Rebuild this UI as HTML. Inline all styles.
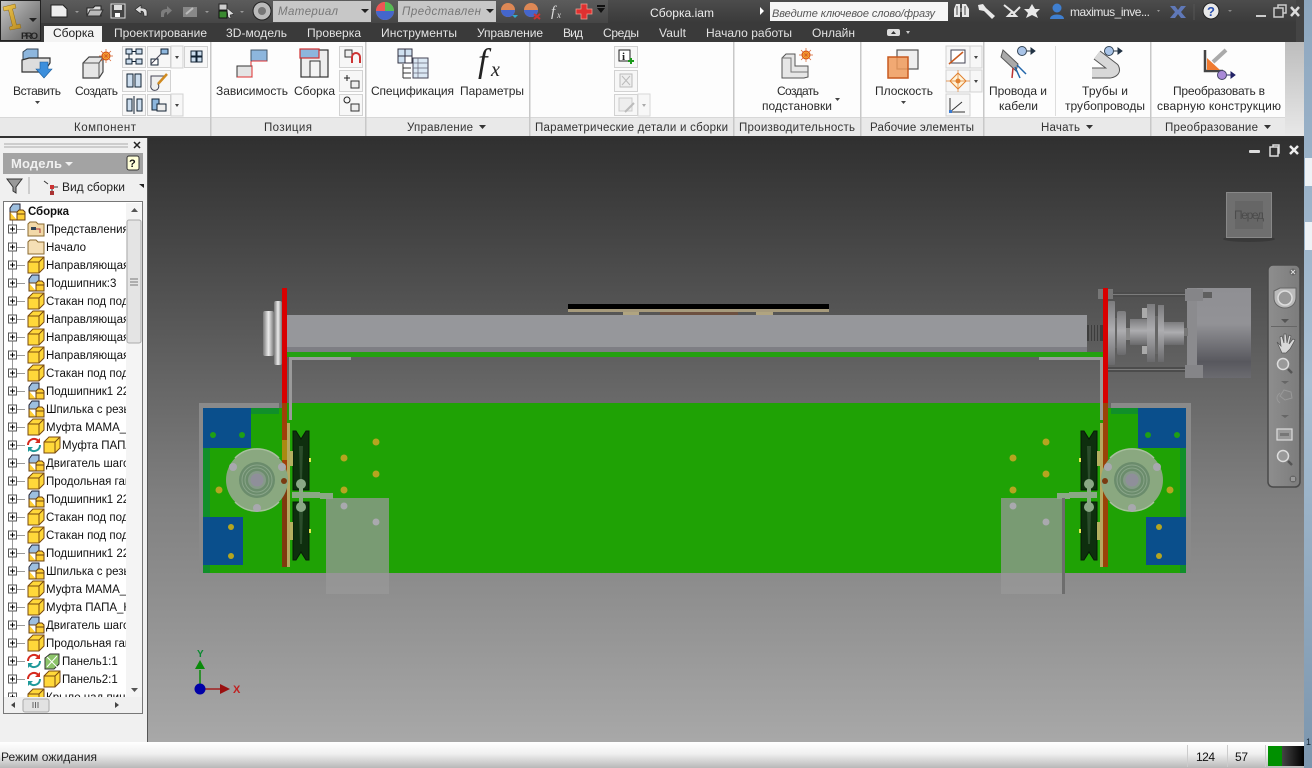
<!DOCTYPE html>
<html><head><meta charset="utf-8"><style>
html,body{margin:0;padding:0;width:1312px;height:768px;overflow:hidden;background:#fff}
svg{display:block}
text{font-family:"Liberation Sans",sans-serif;font-size:11.5px;fill:#222}
.tab{fill:#e4e4e4;font-size:12px}
.rb{fill:#2a2a2a;font-size:12px}
.pt{fill:#333;font-size:11.5px}
.tr{fill:#111;font-size:11.5px}
</style></head><body>
<svg width="1312" height="768" viewBox="0 0 1312 768" xmlns="http://www.w3.org/2000/svg">
<defs>
<linearGradient id="vp" x1="0" y1="0" x2="0" y2="1"><stop offset="0" stop-color="#303030"/><stop offset=".235" stop-color="#4e4e4e"/><stop offset=".6" stop-color="#808080"/><stop offset=".76" stop-color="#8f8f8f"/><stop offset="1" stop-color="#a8a8a8"/></linearGradient>
<linearGradient id="tb" x1="0" y1="0" x2="0" y2="1"><stop offset="0" stop-color="#4c4c4c"/><stop offset="1" stop-color="#3a3a3a"/></linearGradient>
<linearGradient id="qat" x1="0" y1="0" x2="0" y2="1"><stop offset="0" stop-color="#5c5c5c"/><stop offset="1" stop-color="#464646"/></linearGradient>
<linearGradient id="logo" x1="0" y1="0" x2="1" y2="1"><stop offset="0" stop-color="#c8c8c8"/><stop offset=".55" stop-color="#8a8a8a"/><stop offset="1" stop-color="#5a5a5a"/></linearGradient>
<linearGradient id="igold" x1="0" y1="0" x2="1" y2="1"><stop offset="0" stop-color="#f0c850"/><stop offset="1" stop-color="#b88a20"/></linearGradient>
<linearGradient id="st" x1="0" y1="0" x2="0" y2="1"><stop offset="0" stop-color="#fff"/><stop offset=".45" stop-color="#f0f0f0"/><stop offset="1" stop-color="#b8b8b8"/></linearGradient>
<linearGradient id="frm" x1="0" y1="0" x2="0" y2="1"><stop offset="0" stop-color="#8ea7bf"/><stop offset=".5" stop-color="#a9c0d4"/><stop offset="1" stop-color="#7b95ad"/></linearGradient>
<linearGradient id="motor" x1="0" y1="0" x2="0" y2="1"><stop offset="0" stop-color="#8f8f93"/><stop offset=".4" stop-color="#929296"/><stop offset=".82" stop-color="#58585e"/><stop offset="1" stop-color="#6b6b70"/></linearGradient>
<linearGradient id="cyl" x1="0" y1="0" x2="0" y2="1"><stop offset="0" stop-color="#7c7c7e"/><stop offset=".45" stop-color="#adadb0"/><stop offset="1" stop-color="#6a6a6c"/></linearGradient>
<linearGradient id="cylh" x1="0" y1="0" x2="1" y2="0"><stop offset="0" stop-color="#777"/><stop offset=".5" stop-color="#ececec"/><stop offset="1" stop-color="#777"/></linearGradient>
<linearGradient id="blk" x1="0" y1="0" x2="1" y2="0"><stop offset="0" stop-color="#444"/><stop offset="1" stop-color="#000"/></linearGradient>
<linearGradient id="ribr" x1="0" y1="0" x2="0" y2="1"><stop offset="0" stop-color="#bdbdbd"/><stop offset="1" stop-color="#e8e8e8"/></linearGradient>
<linearGradient id="nav" x1="0" y1="0" x2="1" y2="0"><stop offset="0" stop-color="#8e8e8e"/><stop offset="1" stop-color="#7c7c7c"/></linearGradient>
<clipPath id="tc"><rect x="4" y="203" width="122" height="494"/></clipPath>
<clipPath id="vc"><rect x="148" y="138" width="1156" height="604"/></clipPath>
<symbol id="part" viewBox="0 0 18 18" overflow="visible"><path d="M1 6L6 1H17V12L12 17H1Z" fill="#ffd83a" stroke="#7a4a10" stroke-width="1"/><path d="M1 6H12V17M12 6L17 1" fill="none" stroke="#7a4a10" stroke-width="1"/></symbol>
<symbol id="asm" viewBox="0 0 18 18" overflow="visible"><path d="M2 5L5 1H12V9H2Z" fill="#9dbfe0" stroke="#223" stroke-width="1"/><path d="M2 9V17H9V9L11 7H15L17 9V17H9" fill="#ffcf35" stroke="#6a4010" stroke-width="1"/><path d="M2 9H9M9 11H17" stroke="#6a4010" fill="none"/></symbol>
<symbol id="plus" viewBox="0 0 9 9" overflow="visible"><rect x=".5" y=".5" width="8" height="8" fill="#fff" stroke="#555"/><path d="M2 4.500H7M4.500 2V7" stroke="#000"/></symbol>
<symbol id="sync" viewBox="0 0 16 16" overflow="visible"><path d="M2 8A6 6 0 0 1 12 3.500" fill="none" stroke="#d62a1e" stroke-width="2"/><path d="M14 1V6H9Z" fill="#d62a1e"/><path d="M14 8A6 6 0 0 1 4 12.500" fill="none" stroke="#1f9a9a" stroke-width="2"/><path d="M2 15V10H7Z" fill="#1f9a9a"/></symbol>
<symbol id="btn" viewBox="0 0 24 22" overflow="visible"><rect x=".5" y=".5" width="23" height="21" fill="#f7f7f7" stroke="#d2d2d2"/></symbol>
<symbol id="disk" viewBox="-32 -32 64 64" overflow="visible"><circle r="31" fill="#8aa880"/><path d="M-22 -22A31 31 0 0 1 22 -22M-22 22A31 31 0 0 0 22 22" fill="none" stroke="#a8c09e" stroke-width="1.500"/><circle r="18" fill="#6b8c6c"/><circle r="15" fill="none" stroke="#8aa58a"/><circle r="12" fill="none" stroke="#88a488"/><circle r="9" fill="#859a88"/><circle r="6.500" fill="#8f8f9a"/></symbol>
<symbol id="pultop" viewBox="0 0 16 59" overflow="visible"><path d="M0 0H3L8 8L13 0H16V59H0Z" fill="#0e2f0e" stroke="#071a07"/><path d="M6 15H10L9 50H7Z" fill="#2b4d2b"/></symbol>
<symbol id="pulbot" viewBox="0 0 16 58" overflow="visible"><path d="M0 0H16V58H13L8 50L3 58H0Z" fill="#0e2f0e" stroke="#071a07"/><path d="M6 8H10L9 42H7Z" fill="#2b4d2b"/></symbol>
</defs>

<!-- frame backdrop -->
<rect x="0" y="0" width="1312" height="768" fill="#f0f0f0"/>
<rect x="1304" y="0" width="8" height="768" fill="url(#frm)"/>
<rect x="1305" y="158" width="7" height="28" fill="#eef2f6"/>
<rect x="1305" y="222" width="7" height="28" fill="#eef2f6"/>
<text x="1306" y="745" style="font-size:9px;fill:#123">1</text>

<!-- title + tab bars -->
<rect x="0" y="0" width="1304" height="23" fill="url(#tb)"/>
<rect x="40" y="0" width="568" height="23" fill="url(#qat)"/>
<rect x="0" y="23" width="1304" height="19" fill="#3a3a3a"/>
<rect x="1296" y="0" width="8" height="42" fill="#444"/>

<!-- logo -->
<rect x=".5" y=".5" width="40" height="40" fill="url(#logo)" stroke="#222"/>
<path d="M3 7L15 4L16 8L12.500 9L16.500 25L20 24L21 28L10 30L9.500 27L12.500 26L8.500 10L4 11Z" fill="url(#igold)" stroke="#8a6818" stroke-width=".5"/>
<path d="M29 18H37L33 22Z" fill="#222"/>
<text x="21" y="39" style="font-size:9.5px;font-weight:bold;fill:#222" textLength="17">PRO</text>

<!-- QAT icons -->
<g>
<path d="M51 5H63L67 9V17H51Z" fill="#eee" stroke="#222"/><path d="M75 11L79 11L77 13Z" fill="#999"/>
<path d="M87 8H93L95 6H101V16H87Z" fill="#ddd" stroke="#222"/><path d="M87 16L90 10H103L100 16Z" fill="#bbb" stroke="#333"/>
<rect x="111" y="4" width="14" height="14" fill="#444" stroke="#ddd"/><rect x="114" y="5" width="8" height="5" fill="#ddd"/><rect x="115" y="13" width="5" height="4" fill="#fff"/>
<path d="M148 17V13C148 10 145 9 142 9V6L136 10.500L142 15V12C144 12 145 13 145 17Z" fill="#ddd" stroke="#222" stroke-width=".6" transform="translate(-1,-1)"/>
<path d="M161 17V13C161 10 164 9 167 9V6L172 10.500L167 15V12C165 12 164 13 164 17Z" fill="#7d7d7d"/>
<path d="M183 7H197V17H183Z" fill="#888"/><path d="M186 14L193 8" stroke="#bbb" stroke-width="2"/>
<path d="M205 11L209 11L207 13Z" fill="#999"/>
<rect x="219" y="4" width="8" height="6" fill="#ccc" stroke="#222"/><rect x="219" y="11" width="8" height="7" fill="#3a8a30" stroke="#111"/><path d="M227 8L234 14L230 15L231 19L228 17Z" fill="#ddd" stroke="#222" stroke-width=".5"/>
<path d="M240 11L244 11L242 13Z" fill="#999"/>
<circle cx="262" cy="11" r="9" fill="#bbb" stroke="#222"/><circle cx="262" cy="11" r="4" fill="#777"/>
<rect x="273" y="1" width="98" height="21" fill="#c7c7c7"/>
<text x="278" y="15" style="font-style:italic;fill:#777" textLength="60">Материал</text>
<path d="M361 9H369L365 13Z" fill="#222"/>
<circle cx="385" cy="11" r="9" fill="#d85"/><path d="M385 2A9 9 0 0 1 394 11H385Z" fill="#5b5"/><path d="M376 11A9 9 0 0 0 394 11Z" fill="#46c"/><path d="M376 11A9 9 0 0 1 385 2V11Z" fill="#e55"/>
<rect x="398" y="1" width="98" height="21" fill="#c7c7c7"/>
<text x="402" y="15" style="font-style:italic;fill:#777" textLength="79">Представлен</text>
<path d="M486 9H494L490 13Z" fill="#222"/>
<circle cx="508" cy="10" r="7" fill="#d85"/><path d="M501 10A7 7 0 0 0 515 10Z" fill="#46c"/><path d="M512 15H518L515 18Z" fill="#3ac"/>
<circle cx="531" cy="10" r="7" fill="#d85"/><path d="M524 10A7 7 0 0 0 538 10Z" fill="#46c"/><path d="M534 14L540 19M540 14L534 19" stroke="#c33" stroke-width="2"/>
<text x="551" y="16" style="font-family:'Liberation Serif',serif;font-style:italic;font-size:15px;fill:#ddd">f</text>
<text x="557" y="18" style="font-family:'Liberation Serif',serif;font-style:italic;font-size:9px;fill:#ddd">x</text>
<path d="M575 4H581V9H586V14H581V19H575V14H570V9H575Z" fill="#e03030" stroke="#f0a090" stroke-width=".7" transform="translate(6,0)"/>
<path d="M597 5H605V7H597ZM597 8H605L601 13Z" fill="#111"/>
</g>
<text x="650" y="17" style="fill:#eee;font-size:12px" textLength="64">Сборка.iam</text>
<path d="M760 7L764 11L760 15Z" fill="#fff"/>
<rect x="770" y="2" width="178" height="19" fill="#f6f6f6"/>
<text x="772" y="17" style="font-style:italic;fill:#555;font-size:11px" textLength="163">Введите ключевое слово/фразу</text>
<g fill="#e8e8e8">
<path d="M954 17V9L956 4H960V17ZM962 17V4H966L969 9V17Z"/><path d="M960 8H962V12H960Z" fill="#777"/><path d="M957 6V15M965 6V15" stroke="#444"/>
<path d="M978 5L983 4L986 8L995 16L992 19L984 11L979 10Z"/>
<path d="M1004 5L1014 13L1020 7M1008 16H1016L1012 12Z" stroke="#e8e8e8" stroke-width="2" fill="none"/>
<path d="M1032 4L1035 9H1040L1036 13L1038 18L1032 15L1026 18L1028 13L1024 9H1029Z"/>
</g>
<circle cx="1057" cy="8" r="4.500" fill="#3f7fd0"/><path d="M1050 19C1050 13 1064 13 1064 19Z" fill="#3f7fd0"/>
<text x="1070" y="16" style="fill:#e6e6e6;font-size:12px" textLength="80">maximus_inve...</text>
<path d="M1157 10H1160L1158.500 12Z" fill="#999"/>
<path d="M1170 6H1175L1178 10L1181 6H1186L1181 12L1186 18H1181L1178 14L1175 18H1170L1175 12Z" fill="#5f78b8"/>
<path d="M1194 4V20" stroke="#555"/>
<circle cx="1211" cy="11" r="8" fill="#e8e8e8" stroke="#222"/>
<text x="1207" y="16" style="font-weight:bold;font-size:13px;fill:#2a50b0">?</text>
<path d="M1228 10H1232L1230 12Z" fill="#888"/>
<path d="M1256 15H1266V17H1256Z" fill="#ccc"/>
<rect x="1274" y="8" width="9" height="9" fill="none" stroke="#ccc" stroke-width="1.500"/><path d="M1278 8V5H1286V13H1283" fill="none" stroke="#ccc" stroke-width="1.500"/>
<path d="M1291 7L1299 16M1299 7L1291 16" stroke="#ddd" stroke-width="2.500"/>

<!-- tabs -->
<path d="M44 42V26H102V42Z" fill="#f4f4f4"/>
<text x="53" y="37" style="font-size:12px;fill:#222" textLength="41">Сборка</text>
<text class="tab" x="114" y="37" textLength="93">Проектирование</text>
<text class="tab" x="226" y="37" textLength="61">3D-модель</text>
<text class="tab" x="307" y="37" textLength="54">Проверка</text>
<text class="tab" x="381" y="37" textLength="76">Инструменты</text>
<text class="tab" x="477" y="37" textLength="66">Управление</text>
<text class="tab" x="563" y="37" textLength="20">Вид</text>
<text class="tab" x="603" y="37" textLength="36">Среды</text>
<text class="tab" x="659" y="37" textLength="27">Vault</text>
<text class="tab" x="706" y="37" textLength="86">Начало работы</text>
<text class="tab" x="812" y="37" textLength="43">Онлайн</text>
<rect x="887" y="29" width="13" height="7" rx="2" fill="#ddd"/><path d="M891 34L893.500 31L896 34Z" fill="#333"/><path d="M906 31H910L908 34Z" fill="#ccc"/>

<!-- ribbon -->
<rect x="0" y="42" width="1285" height="76" fill="#fdfdfd"/>
<rect x="0" y="118" width="1285" height="18" fill="#e9e9e9"/>
<rect x="0" y="117" width="1285" height="1" fill="#d8d8d8"/>
<rect x="1285" y="42" width="19" height="94" fill="url(#ribr)"/>
<rect x="0" y="136" width="1304" height="2" fill="#333"/>
<g fill="#c8c8c8">
<rect x="210" y="42" width="1.500" height="94"/><rect x="365" y="42" width="1.500" height="94"/><rect x="529" y="42" width="1.500" height="94"/><rect x="733" y="42" width="1.500" height="94"/><rect x="860" y="42" width="1.500" height="94"/><rect x="983" y="42" width="1.500" height="94"/><rect x="1150" y="42" width="1.500" height="94"/>
</g>
<rect x="1055" y="46" width="1" height="70" fill="#ddd"/>

<!-- ribbon labels -->
<text class="rb" x="13" y="95" textLength="48">Вставить</text>
<path d="M35 101H40L37.500 104Z" fill="#444"/>
<text class="rb" x="75" y="95" textLength="43">Создать</text>
<text class="rb" x="216" y="95" textLength="72">Зависимость</text>
<text class="rb" x="294" y="95" textLength="41">Сборка</text>
<text class="rb" x="371" y="95" textLength="83">Спецификация</text>
<text class="rb" x="460" y="95" textLength="64">Параметры</text>
<text class="rb" x="777" y="95" textLength="42">Создать</text>
<text class="rb" x="762" y="110" textLength="70">подстановки</text>
<path d="M835 98H840L837.500 101Z" fill="#444"/>
<text class="rb" x="875" y="95" textLength="58">Плоскость</text>
<path d="M901 101H906L903.500 104Z" fill="#444"/>
<text class="rb" x="989" y="95" textLength="58">Провода и</text>
<text class="rb" x="999" y="110" textLength="39">кабели</text>
<text class="rb" x="1082" y="95" textLength="46">Трубы и</text>
<text class="rb" x="1065" y="110" textLength="80">трубопроводы</text>
<text class="rb" x="1173" y="95" textLength="92">Преобразовать в</text>
<text class="rb" x="1157" y="110" textLength="124">сварную конструкцию</text>

<text class="pt" x="74" y="131" textLength="62">Компонент</text>
<text class="pt" x="264" y="131" textLength="48">Позиция</text>
<text class="pt" x="407" y="131" textLength="66">Управление</text><path d="M479 125H486L482.500 129Z" fill="#333"/>
<text class="pt" x="535" y="131" textLength="193">Параметрические детали и сборки</text>
<text class="pt" x="739" y="131" textLength="116">Производительность</text>
<text class="pt" x="870" y="131" textLength="104">Рабочие элементы</text>
<text class="pt" x="1041" y="131" textLength="39">Начать</text><path d="M1086 125H1093L1089.500 129Z" fill="#333"/>
<text class="pt" x="1165" y="131" textLength="93">Преобразование</text><path d="M1264 125H1271L1267.500 129Z" fill="#333"/>

<!-- ribbon icons : Компонент -->
<path d="M23 60V52L27 49H38V60Z" fill="#8db6dd" stroke="#345"/>
<path d="M22 72V60L29 58H50V63L44 72Z" fill="#ddd" stroke="#333" stroke-width="1.200"/>
<path d="M40 62H48V69H52L44 78L36 69H40Z" fill="#3d8fdc" stroke="#1c5f9e" stroke-width=".6"/>
<path d="M83 63L89 57H103V72L99 78H83Z" fill="#e6e6e6" stroke="#444" stroke-width="1.200"/><path d="M83 63H99V78M99 63L103 57" fill="none" stroke="#555"/>
<circle cx="106" cy="56" r="4" fill="#ffb030" stroke="#d04a10"/><path d="M106 49V63M99 56H113M101 51L111 61M111 51L101 61" stroke="#d5602a" stroke-width=".7"/>
<g>
<use href="#btn" x="122" y="46" width="24" height="22"/>
<use href="#btn" x="147" y="46" width="24" height="22"/><rect x="171" y="46" width="12" height="22" fill="#f7f7f7" stroke="#d2d2d2"/>
<use href="#btn" x="184" y="46" width="24" height="22"/>
<use href="#btn" x="122" y="70" width="24" height="22"/>
<use href="#btn" x="147" y="70" width="24" height="22"/>
<use href="#btn" x="122" y="94" width="24" height="22"/>
<use href="#btn" x="147" y="94" width="24" height="22"/><rect x="171" y="94" width="12" height="22" fill="#f7f7f7" stroke="#d2d2d2"/>
<path d="M175 56H179L177 59ZM175 104H179L177 107Z" fill="#444"/>
<g fill="#cde" stroke="#123"><rect x="126" y="49" width="6" height="5"/><rect x="136" y="49" width="6" height="5"/><rect x="126" y="59" width="6" height="5"/><rect x="136" y="59" width="6" height="5"/>
<rect x="161" y="49" width="7" height="5" fill="#8db6dd"/><rect x="151" y="59" width="7" height="6" fill="#fff"/>
<rect x="197" y="51" width="5" height="5"/><rect x="197" y="57" width="5" height="5"/><rect x="191" y="51" width="5" height="5"/><rect x="191" y="57" width="5" height="5"/>
<rect x="127" y="74" width="6" height="13"/><rect x="135" y="74" width="6" height="13"/>
<rect x="127" y="99" width="5" height="12"/><rect x="137" y="99" width="5" height="12"/>
<rect x="152" y="99" width="7" height="11" fill="#8db6dd"/><rect x="157" y="104" width="9" height="7" fill="#eee"/></g>
<path d="M134 96V114" stroke="#123"/>
<path d="M129 54V59M132 51.500H136M132 61.500H136" stroke="#123"/>
<path d="M151 64L161 54M151 76H165L158 84A4 4 0 1 1 151 85Z" fill="#eee" stroke="#445"/><path d="M158 84L167 74" stroke="#d08a20" stroke-width="2.500"/>
</g>
<!-- Позиция -->
<rect x="251" y="50" width="16" height="11" fill="#8db6dd" stroke="#456"/>
<rect x="237" y="66" width="15" height="11" fill="#e4e4e4" stroke="#333"/>
<path d="M251 61V66M252 66V77M237 77H252M252 61H267" stroke="#e03030" stroke-width="1"/>
<rect x="301" y="50" width="27" height="27" fill="#eee" stroke="#333" stroke-width="1.200"/>
<path d="M310 61H320V77H310Z" fill="#f4f4f4" stroke="#333"/>
<rect x="300" y="49" width="19" height="9" fill="#8db6dd" stroke="#d03030" stroke-width="1.200"/>
<use href="#btn" x="339" y="46" width="24" height="22"/><use href="#btn" x="339" y="70" width="24" height="22"/><use href="#btn" x="339" y="94" width="24" height="22"/>
<path d="M345 50H352V57H345Z" fill="#eee" stroke="#333"/><path d="M352 63V57A4 4 0 0 1 360 57V63" fill="none" stroke="#c33" stroke-width="2"/>
<path d="M347 75V81M344 78H350" stroke="#222"/><path d="M351 81H359V88H351Z" fill="#eee" stroke="#333"/>
<circle cx="347" cy="100" r="3" fill="none" stroke="#222"/><path d="M351 104H359V111H351Z" fill="#eee" stroke="#333"/>
<!-- Управление -->
<g fill="#cfe0f0" stroke="#334"><rect x="398" y="49" width="7" height="7"/><rect x="405" y="49" width="7" height="7"/><rect x="398" y="56" width="7" height="7"/><rect x="405" y="56" width="7" height="7" fill="#fff"/></g>
<path d="M403 64V78M403 68H411M403 73H411M403 78H411" stroke="#333" fill="none"/>
<rect x="413" y="58" width="15" height="20" fill="#dbe8f4" stroke="#445"/>
<path d="M413 63H428M413 68H428M413 73H428M418 58V78" stroke="#667" fill="none" stroke-width=".7"/>
<text x="478" y="72" style="font-family:'Liberation Serif',serif;font-style:italic;font-size:34px;fill:#222">f</text>
<text x="491" y="76" style="font-family:'Liberation Serif',serif;font-style:italic;font-size:20px;fill:#222">x</text>
<!-- Параметрические -->
<use href="#btn" x="614" y="46" width="24" height="22"/><use href="#btn" x="614" y="70" width="24" height="22"/><use href="#btn" x="614" y="94" width="24" height="22"/>
<rect x="638" y="94" width="12" height="22" fill="#f7f7f7" stroke="#d8d8d8"/><path d="M642 104H646L644 107Z" fill="#aaa"/>
<rect x="619" y="50" width="11" height="11" fill="#fff" stroke="#222"/><text x="622" y="60" style="font-family:'Liberation Serif',serif;font-size:11px;font-weight:bold;fill:#222">i</text><path d="M631 58V64M628 61H634" stroke="#1a9a1a" stroke-width="2"/>
<rect x="620" y="74" width="12" height="13" fill="#eee" stroke="#bbb"/><path d="M622 76L630 85M630 76L622 85" stroke="#bbb"/>
<rect x="619" y="98" width="13" height="13" fill="#eee" stroke="#ccc"/><path d="M625 112L634 103" stroke="#bbb" stroke-width="2"/>
<!-- Производительность -->
<path d="M782 58L786 54H795V66H808V77L804 78H782Z" fill="#e6e6e6" stroke="#555"/><path d="M782 58H791V72H808" fill="none" stroke="#777"/>
<circle cx="806" cy="55" r="4" fill="#ffb030" stroke="#d04a10"/><path d="M806 48V62M799 55H813M801 50L811 60M811 50L801 60" stroke="#d5602a" stroke-width=".7"/>
<!-- Рабочие элементы -->
<rect x="897" y="50" width="21" height="19" fill="#eee" stroke="#555" stroke-width="1.200"/>
<rect x="888" y="57" width="20" height="21" fill="#ef9a5a" fill-opacity=".85" stroke="#c85a20" stroke-width="1.500"/>
<rect x="946" y="46" width="24" height="22" fill="#f7f7f7" stroke="#d2d2d2"/><rect x="970" y="46" width="12" height="22" fill="#f7f7f7" stroke="#d2d2d2"/>
<rect x="946" y="70" width="24" height="22" fill="#f7f7f7" stroke="#d2d2d2"/><rect x="970" y="70" width="12" height="22" fill="#f7f7f7" stroke="#d2d2d2"/>
<rect x="946" y="94" width="24" height="22" fill="#f7f7f7" stroke="#d2d2d2"/>
<path d="M974 56H978L976 59ZM974 80H978L976 83Z" fill="#444"/>
<rect x="951" y="50" width="14" height="13" fill="#fff" stroke="#445"/><path d="M949 64L963 52" stroke="#c85a20" stroke-width="1.500"/>
<path d="M958 73L966 81L958 89L950 81Z" fill="#fff3d8" stroke="#e08030"/><circle cx="958" cy="81" r="2.500" fill="#e08030"/><path d="M946 81H970M958 70V92" stroke="#e08030" stroke-width=".7"/>
<path d="M950 98V112H965M950 112L962 102" stroke="#333" fill="none"/><rect x="949" y="110" width="3" height="3" fill="#3a7ad0"/>
<!-- Начать -->
<path d="M1003 50L1018 64L1016 71L1001 57Z" fill="#aaa" stroke="#555"/>
<path d="M1015 67L1020 78M1017 65L1026 74" stroke="#26a" stroke-width="1.500" fill="none"/><path d="M1013 68L1012 78" stroke="#b33" stroke-width="1.500"/>
<circle cx="1022" cy="51" r="4.500" fill="#a9c4e8" stroke="#345"/><path d="M1027 51H1032M1031 48L1035 51L1031 54Z" stroke="#234" fill="#234"/>
<path d="M1097 55L1114 68Q1116 72 1110 73H1092" fill="none" stroke="#555" stroke-width="11" stroke-linejoin="round"/>
<path d="M1097 55L1114 68Q1116 72 1110 73H1092" fill="none" stroke="#d8d8d8" stroke-width="9" stroke-linejoin="round"/>
<circle cx="1109" cy="51" r="4.500" fill="#a9c4e8" stroke="#345"/><path d="M1114 51H1119M1118 48L1122 51L1118 54Z" stroke="#234" fill="#234"/>
<!-- Преобразование -->
<path d="M1205 50V71H1223" fill="none" stroke="#444" stroke-width="2.500"/>
<path d="M1207 58L1220 70H1207Z" fill="#ef7a30"/><path d="M1213 62L1226 50" stroke="#aaa" stroke-width="4"/>
<circle cx="1222" cy="75" r="4.500" fill="#a98ad8" stroke="#446"/><path d="M1227 75H1233M1231 72L1235 75L1231 78Z" stroke="#226" fill="#226"/>

<!-- viewport -->
<rect x="148" y="138" width="1156" height="604" fill="url(#vp)"/>
<rect x="147" y="138" width="1" height="604" fill="#555"/>
<g clip-path="url(#vc)">
<!-- plate -->
<rect x="199" y="403" width="80" height="5" fill="#8a8a8a"/><rect x="199" y="403" width="4" height="170" fill="#8a8a8a"/>
<rect x="1111" y="403" width="80" height="5" fill="#8a8a8a"/><rect x="1186" y="403" width="5" height="170" fill="#8a8a8a"/>
<rect x="203" y="408" width="983" height="165" fill="#1fa205"/>
<rect x="287" y="403" width="816" height="6" fill="#1fa205"/>
<rect x="203" y="408" width="76" height="6" fill="#108f2a"/><rect x="203" y="448" width="7" height="125" fill="#108f2a"/>
<rect x="1111" y="408" width="27" height="6" fill="#108f2a"/><rect x="1180" y="448" width="6" height="125" fill="#108f2a"/>
<rect x="203" y="408" width="48" height="40" fill="#0a4f8c"/><rect x="203" y="517" width="40" height="48" fill="#0a4f8c"/>
<rect x="1138" y="408" width="48" height="40" fill="#0a4f8c"/><rect x="1146" y="517" width="40" height="48" fill="#0a4f8c"/>
<g fill="#1f9f15"><circle cx="213" cy="435" r="3"/><circle cx="242" cy="435" r="3"/><circle cx="1148" cy="435" r="3"/><circle cx="1177" cy="435" r="3"/></g>
<g fill="#b5a520"><circle cx="231" cy="527" r="3"/><circle cx="231" cy="556" r="3"/><circle cx="1159" cy="527" r="3"/><circle cx="1159" cy="556" r="3"/>
<circle cx="219" cy="490" r="3.500"/><circle cx="1170" cy="490" r="3.500"/>
<circle cx="376" cy="442" r="3.500"/><circle cx="344" cy="458" r="3.500"/><circle cx="376" cy="474" r="3.500"/><circle cx="344" cy="490" r="3.500"/>
<circle cx="1046" cy="442" r="3.500"/><circle cx="1013" cy="458" r="3.500"/><circle cx="1046" cy="474" r="3.500"/><circle cx="1013" cy="490" r="3.500"/></g>

<!-- top bar -->
<rect x="568" y="304" width="261" height="5" fill="#000"/>
<rect x="568" y="309" width="261" height="3" fill="#a69a7c"/>
<rect x="660" y="312" width="78" height="3" fill="#6d5040"/><rect x="623" y="312" width="16" height="3" fill="#b0a480"/><rect x="756" y="312" width="17" height="3" fill="#b0a480"/>
<rect x="287" y="315" width="800" height="32" fill="#96979b"/>
<rect x="287" y="347" width="800" height="5" fill="#7e7e84"/>
<rect x="287" y="352" width="816" height="5" fill="#24a010"/>
<rect x="289" y="357" width="62" height="3" fill="#9a9a9a"/><rect x="289" y="357" width="3" height="63" fill="#9a9a9a"/>
<rect x="1039" y="357" width="62" height="3" fill="#9a9a9a"/><rect x="1100" y="357" width="3" height="63" fill="#9a9a9a"/>
<!-- left knob -->
<rect x="263" y="311" width="11" height="45" rx="2" fill="url(#cylh)"/>
<rect x="274" y="301" width="8" height="64" rx="2" fill="url(#cylh)"/>
<!-- red bars -->
<rect x="282" y="288" width="5" height="115" fill="#d80000"/>
<rect x="282" y="403" width="5" height="77" fill="#a04008"/><rect x="282" y="440" width="5" height="20" fill="#a98a12"/><rect x="282" y="480" width="5" height="87" fill="#7f3a0d"/>
<rect x="287" y="423" width="3" height="144" fill="#b5a860"/>
<rect x="1103" y="288" width="5" height="115" fill="#d80000"/>
<rect x="1103" y="403" width="5" height="164" fill="#9a4208"/>
<rect x="1100" y="423" width="3" height="144" fill="#b5a860"/>
<!-- pulleys -->
<use href="#pultop" x="293" y="431" width="16" height="59"/><use href="#pulbot" x="293" y="502" width="16" height="58"/>
<use href="#pultop" x="1081" y="431" width="16" height="59"/><use href="#pulbot" x="1081" y="502" width="16" height="58"/>
<g fill="#e6e650"><rect x="309" y="458" width="2" height="4"/><rect x="309" y="529" width="2" height="4"/><rect x="1079" y="458" width="2" height="4"/><rect x="1079" y="529" width="2" height="4"/></g>
<rect x="290" y="451" width="3" height="15" fill="#b5b060"/><rect x="290" y="522" width="3" height="18" fill="#b5b060"/>
<rect x="1097" y="451" width="3" height="15" fill="#b5b060"/><rect x="1097" y="522" width="3" height="18" fill="#b5b060"/>
<g fill="#8aa885"><circle cx="301" cy="484" r="5"/><circle cx="301" cy="507" r="5"/><rect x="292" y="492" width="28" height="6"/><rect x="320" y="493" width="13" height="6"/><rect x="299" y="484" width="4" height="23"/>
<circle cx="1089" cy="484" r="5"/><circle cx="1089" cy="507" r="5"/><rect x="1069" y="492" width="28" height="6"/><rect x="1057" y="493" width="13" height="6"/><rect x="1087" y="484" width="4" height="23"/></g>
<!-- disks -->
<use href="#disk" x="225" y="448" width="64" height="64"/>
<use href="#disk" x="1100" y="448" width="64" height="64"/>
<g fill="#a8a8ae"><circle cx="233" cy="467" r="4"/><circle cx="282" cy="467" r="4"/><circle cx="257" cy="508" r="4"/><circle cx="1108" cy="467" r="4"/><circle cx="1157" cy="467" r="4"/><circle cx="1132" cy="508" r="4"/></g>
<circle cx="284" cy="481" r="3" fill="#7a3a10"/><circle cx="1105" cy="481" r="3" fill="#7a3a10"/>
<!-- translucent -->
<rect x="326" y="498" width="63" height="96" fill="#989898" fill-opacity=".75"/>
<rect x="1001" y="498" width="62" height="96" fill="#989898" fill-opacity=".75"/>
<rect x="1062" y="498" width="3" height="96" fill="#6d6d6d"/>
<g fill="#a9a9ae"><circle cx="344" cy="506" r="3.500"/><circle cx="376" cy="522" r="3.500"/><circle cx="1013" cy="506" r="3.500"/><circle cx="1046" cy="522" r="3.500"/></g>
<!-- motor side -->
<rect x="1087" y="325" width="16" height="16" fill="#3d3d3d"/><path d="M1090 325V341M1093 325V341M1096 325V341M1099 325V341" stroke="#777"/>
<rect x="1098" y="289" width="5" height="10" fill="#777"/><rect x="1108" y="289" width="5" height="10" fill="#777"/>
<rect x="1113" y="292" width="76" height="5" fill="#4c4c4c"/><rect x="1113" y="294" width="76" height="1" fill="#7c7c7c"/>
<rect x="1108" y="367" width="108" height="5" fill="#4c4c4c"/><rect x="1108" y="369" width="108" height="1" fill="#7c7c7c"/>
<rect x="1197" y="288" width="54" height="90" fill="url(#motor)"/>
<rect x="1187" y="288" width="10" height="90" fill="#8b8b8e"/>
<rect x="1185" y="365" width="18" height="13" fill="#858588"/><rect x="1185" y="289" width="18" height="12" fill="#858588"/>
<rect x="1203" y="292" width="9" height="6" fill="#5f5f5f"/>
<rect x="1108" y="301" width="7" height="64" rx="1" fill="url(#cyl)"/>
<rect x="1117" y="311" width="9" height="44" rx="2" fill="url(#cyl)"/>
<rect x="1115" y="318" width="2" height="30" fill="#666"/>
<rect x="1126" y="328" width="4" height="12" fill="#888"/>
<rect x="1130" y="319" width="17" height="26" fill="url(#cyl)"/>
<rect x="1142" y="308" width="5" height="10" fill="#aaa"/><rect x="1142" y="346" width="5" height="8" fill="#aaa"/>
<rect x="1147" y="304" width="8" height="58" fill="url(#cyl)"/>
<rect x="1155" y="316" width="3" height="38" fill="#666"/>
<rect x="1158" y="305" width="6" height="57" fill="url(#cyl)"/>
<rect x="1164" y="322" width="20" height="23" fill="url(#cyl)"/>
<rect x="1184" y="328" width="4" height="8" fill="#777"/>
</g>

<!-- triad -->
<path d="M200 689V670" stroke="#0a8a0a" stroke-width="1.500"/><path d="M195 669L200 660L205 669Z" fill="#0a8a0a"/>
<text x="197" y="657" style="font-size:10px;font-weight:bold;fill:#0a8a30" textLength="7">Y</text>
<path d="M200 689H222" stroke="#a02020" stroke-width="1.500"/><path d="M220 684L230 689L220 694Z" fill="#9a1010"/>
<text x="233" y="693" style="font-size:11px;font-weight:bold;fill:#c02020" textLength="8">X</text>
<circle cx="200" cy="689" r="5.500" fill="#0000a8"/>

<!-- viewport controls -->
<rect x="1249" y="150" width="11" height="3" rx="1" fill="#ddd"/>
<rect x="1270" y="147" width="8" height="9" fill="none" stroke="#ddd" stroke-width="1.500"/><path d="M1273 147V145H1279V153H1278" fill="none" stroke="#ddd" stroke-width="1.500"/>
<path d="M1290 146L1298 154M1298 146L1290 154" stroke="#eee" stroke-width="2.500"/>

<!-- viewcube -->
<ellipse cx="1249" cy="239" rx="26" ry="3" fill="#2a2a2a" opacity=".45"/>
<rect x="1226.500" y="192.500" width="45" height="45" fill="#6f6f6f" stroke="#888"/>
<rect x="1235" y="201" width="28" height="28" fill="#666"/>
<text x="1234" y="219" style="font-size:12px;fill:#4c4c4c" textLength="30">Перед</text>

<!-- nav bar -->
<rect x="1268" y="265" width="32" height="222" rx="5" fill="url(#nav)" stroke="#4a4a4a" stroke-width="1.500"/>
<circle cx="1293" cy="272" r="3.500" fill="#666"/><path d="M1291 270L1295 274M1295 270L1291 274" stroke="#ddd"/>
<path d="M1274 291L1280 288H1296V297C1296 305 1290 308 1285 308C1279 308 1274 304 1274 298Z" fill="#bbb" stroke="#666"/><circle cx="1285" cy="298" r="7" fill="#999" stroke="#ddd" stroke-width="1.500"/>
<path d="M1281 319H1289L1285 323Z" fill="#555"/>
<path d="M1271 326.500H1297" stroke="#666"/>
<path d="M1277 342L1281 346L1280 337L1282 336L1284 343V334L1286 334L1287 343L1289 335L1291 336L1289 344L1293 339L1295 340L1290 349L1286 353H1282Z" fill="#d8d8d8" stroke="#555" stroke-width=".7"/>
<circle cx="1283" cy="364" r="5.500" fill="#999" stroke="#ddd" stroke-width="1.500"/><path d="M1288 369L1292 373" stroke="#555" stroke-width="2.500"/>
<path d="M1281 381H1289L1285 384Z" fill="#666"/>
<path d="M1280 393C1276 396 1276 400 1280 403M1284 390L1291 392L1292 398L1285 400L1280 396Z" fill="none" stroke="#999"/>
<path d="M1281 415H1289L1285 418Z" fill="#666"/>
<rect x="1277" y="429" width="15" height="11" fill="#999" stroke="#ddd" stroke-width="1.200"/><rect x="1280" y="433" width="9" height="3" fill="#777"/>
<circle cx="1283" cy="456" r="5.500" fill="#999" stroke="#ddd" stroke-width="1.500"/><path d="M1288 461L1292 465" stroke="#555" stroke-width="2.500"/>
<circle cx="1293" cy="479" r="3.500" fill="#666"/><path d="M1291 478H1295M1291 480H1295" stroke="#ccc"/>

<!-- left panel -->
<rect x="0" y="138" width="147" height="604" fill="#f0f0f0"/>
<path d="M4 144H128M4 147H128" stroke="#aaa"/>
<path d="M134 142L140 148M140 142L134 148" stroke="#222" stroke-width="1.500"/>
<rect x="3" y="153" width="140" height="21" fill="#a3a3a3"/>
<text x="11" y="168" style="font-size:13px;font-weight:bold;fill:#f0f0f0" textLength="51">Модель</text>
<path d="M65 162H73L69 166Z" fill="#f0f0f0"/>
<rect x="127" y="156" width="12" height="14" rx="2" fill="#ffffd8" stroke="#333"/>
<text x="129" y="167" style="font-size:11px;font-weight:bold;fill:#111">?</text>
<path d="M7 179H22L16 187V193L13 191V187Z" fill="#999" stroke="#333"/>
<path d="M29 177V194" stroke="#aaa"/>
<path d="M44 181L48 184M52 187V193M52 187H58" stroke="#333"/><rect x="50" y="185" width="4" height="4" fill="#c33"/><rect x="50" y="191" width="4" height="4" fill="#a33"/>
<text x="62" y="191" style="font-size:12px;fill:#222" textLength="63">Вид сборки</text>
<path d="M139 184H144L144 188Z" fill="#222"/>

<!-- tree box -->
<rect x="3.500" y="201.500" width="139" height="512" fill="#fff" stroke="#777"/>
<rect x="126" y="203" width="16" height="494" fill="#f4f4f4"/>
<path d="M131 212L134.500 208L138 212Z" fill="#555"/>
<rect x="127" y="220" width="14" height="123" rx="2" fill="#e4e4e4" stroke="#aaa"/>
<path d="M130 279H138M130 282H138M130 285H138" stroke="#777"/>
<path d="M131 688H138L134.500 692Z" fill="#555"/>
<rect x="4" y="697" width="138" height="16" fill="#f0f0f0"/>
<rect x="23" y="699" width="26" height="13" rx="2" fill="#e2e2e2" stroke="#aaa"/>
<path d="M33 702V708M35.500 702V708M38 702V708" stroke="#666"/>
<path d="M15 702V708L11 705ZM115 702V708L119 705Z" fill="#444"/>

<path d="M12.500 219V697" stroke="#999"/>
<g clip-path="url(#tc)">
<use href="#asm" x="8" y="203" width="18" height="18"/>
<text x="28" y="215" style="font-size:11.5px;font-weight:bold;fill:#111" textLength="41">Сборка</text>
<g stroke="#999">
<path d="M13 229.500H25M13 247.500H25M13 265.500H25M13 283.500H25M13 301.500H25M13 319.500H25M13 337.500H25M13 355.500H25M13 373.500H25M13 391.500H25M13 409.500H25M13 427.500H25M13 445.500H25M13 463.500H25M13 481.500H25M13 499.500H25M13 517.500H25M13 535.500H25M13 553.500H25M13 571.500H25M13 589.500H25M13 607.500H25M13 625.500H25M13 643.500H25M13 661.500H25M13 679.500H25M13 697.500H25"/>
</g>
<use href="#plus" x="8" y="224.500" width="9" height="9"/><use href="#plus" x="8" y="242.500" width="9" height="9"/><use href="#plus" x="8" y="260.500" width="9" height="9"/><use href="#plus" x="8" y="278.500" width="9" height="9"/><use href="#plus" x="8" y="296.500" width="9" height="9"/><use href="#plus" x="8" y="314.500" width="9" height="9"/><use href="#plus" x="8" y="332.500" width="9" height="9"/><use href="#plus" x="8" y="350.500" width="9" height="9"/><use href="#plus" x="8" y="368.500" width="9" height="9"/><use href="#plus" x="8" y="386.500" width="9" height="9"/><use href="#plus" x="8" y="404.500" width="9" height="9"/><use href="#plus" x="8" y="422.500" width="9" height="9"/><use href="#plus" x="8" y="440.500" width="9" height="9"/><use href="#plus" x="8" y="458.500" width="9" height="9"/><use href="#plus" x="8" y="476.500" width="9" height="9"/><use href="#plus" x="8" y="494.500" width="9" height="9"/><use href="#plus" x="8" y="512.500" width="9" height="9"/><use href="#plus" x="8" y="530.500" width="9" height="9"/><use href="#plus" x="8" y="548.500" width="9" height="9"/><use href="#plus" x="8" y="566.500" width="9" height="9"/><use href="#plus" x="8" y="584.500" width="9" height="9"/><use href="#plus" x="8" y="602.500" width="9" height="9"/><use href="#plus" x="8" y="620.500" width="9" height="9"/><use href="#plus" x="8" y="638.500" width="9" height="9"/><use href="#plus" x="8" y="656.500" width="9" height="9"/><use href="#plus" x="8" y="674.500" width="9" height="9"/><use href="#plus" x="8" y="692.500" width="9" height="9"/>

<path d="M28 224V236H44V224H38L36 222H30Z" fill="#f2d9a8" stroke="#8a6a30"/><rect x="31" y="227" width="5" height="3" fill="#345"/><path d="M36 229H40V233" stroke="#a33" fill="none"/>
<path d="M28 242V254H44V242H38L36 240H30Z" fill="#f5dfb5" stroke="#8a6a30"/>

<use href="#part" x="27" y="256" width="18" height="18"/>
<use href="#asm" x="27" y="274" width="18" height="18"/>
<use href="#part" x="27" y="292" width="18" height="18"/>
<use href="#part" x="27" y="310" width="18" height="18"/>
<use href="#part" x="27" y="328" width="18" height="18"/>
<use href="#part" x="27" y="346" width="18" height="18"/>
<use href="#part" x="27" y="364" width="18" height="18"/>
<use href="#asm" x="27" y="382" width="18" height="18"/>
<use href="#asm" x="27" y="400" width="18" height="18"/>
<use href="#part" x="27" y="418" width="18" height="18"/>
<use href="#sync" x="26" y="437" width="16" height="16"/><use href="#part" x="43" y="436" width="18" height="18"/>
<use href="#asm" x="27" y="454" width="18" height="18"/>
<use href="#part" x="27" y="472" width="18" height="18"/>
<use href="#asm" x="27" y="490" width="18" height="18"/>
<use href="#part" x="27" y="508" width="18" height="18"/>
<use href="#part" x="27" y="526" width="18" height="18"/>
<use href="#asm" x="27" y="544" width="18" height="18"/>
<use href="#asm" x="27" y="562" width="18" height="18"/>
<use href="#part" x="27" y="580" width="18" height="18"/>
<use href="#part" x="27" y="598" width="18" height="18"/>
<use href="#asm" x="27" y="616" width="18" height="18"/>
<use href="#part" x="27" y="634" width="18" height="18"/>
<use href="#sync" x="26" y="653" width="16" height="16"/>
<path d="M45 658L50 654H59V664L54 669H45Z" fill="#8cc46a" stroke="#333"/><path d="M47 667L57 656M47 657L57 667" stroke="#fff"/>
<use href="#sync" x="26" y="671" width="16" height="16"/><use href="#part" x="43" y="670" width="18" height="18"/>
<use href="#part" x="27" y="688" width="18" height="18"/>

<text class="tr" x="46" y="233">Представления</text>
<text class="tr" x="46" y="251">Начало</text>
<text class="tr" x="46" y="269">Направляющая</text>
<text class="tr" x="46" y="287">Подшипник:3</text>
<text class="tr" x="46" y="305">Стакан под подшипник</text>
<text class="tr" x="46" y="323">Направляющая</text>
<text class="tr" x="46" y="341">Направляющая</text>
<text class="tr" x="46" y="359">Направляющая</text>
<text class="tr" x="46" y="377">Стакан под подшипник</text>
<text class="tr" x="46" y="395">Подшипник1 22</text>
<text class="tr" x="46" y="413">Шпилька с резьбой</text>
<text class="tr" x="46" y="431">Муфта МАМА_К</text>
<text class="tr" x="62" y="449">Муфта ПАПА_К</text>
<text class="tr" x="46" y="467">Двигатель шаговый</text>
<text class="tr" x="46" y="485">Продольная гайка</text>
<text class="tr" x="46" y="503">Подшипник1 22</text>
<text class="tr" x="46" y="521">Стакан под подшипник</text>
<text class="tr" x="46" y="539">Стакан под подшипник</text>
<text class="tr" x="46" y="557">Подшипник1 22</text>
<text class="tr" x="46" y="575">Шпилька с резьбой</text>
<text class="tr" x="46" y="593">Муфта МАМА_К</text>
<text class="tr" x="46" y="611">Муфта ПАПА_К</text>
<text class="tr" x="46" y="629">Двигатель шаговый</text>
<text class="tr" x="46" y="647">Продольная гайка</text>
<text class="tr" x="62" y="665">Панель1:1</text>
<text class="tr" x="62" y="683">Панель2:1</text>
<text class="tr" x="46" y="701">Крыло над пин</text>
</g>

<!-- status bar -->
<rect x="0" y="742" width="1304" height="26" fill="url(#st)"/>
<text x="1" y="761" style="font-size:12px;fill:#222" textLength="96">Режим ожидания</text>
<path d="M1187.500 745V767M1227.500 745V767M1265.500 745V767" stroke="#ccc"/>
<text x="1196" y="761" style="font-size:12px;fill:#111" textLength="19">124</text>
<text x="1235" y="761" style="font-size:12px;fill:#111" textLength="13">57</text>
<rect x="1268" y="746" width="14" height="20" fill="#009000"/>
<rect x="1282" y="746" width="22" height="20" fill="url(#blk)"/>
</svg>
</body></html>
